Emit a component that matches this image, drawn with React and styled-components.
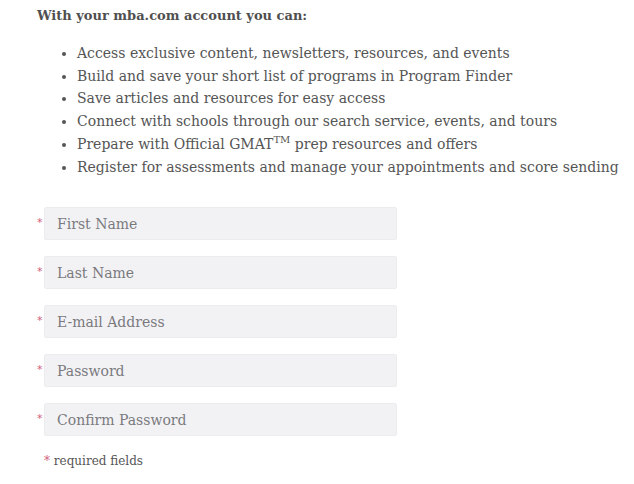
import React from "react";
import styled, { createGlobalStyle } from "styled-components";

const Global = createGlobalStyle`
  html, body { margin: 0; padding: 0; background: #fff; }
  body { font-family: "DejaVu Serif", serif; color: #555; }
`;

const Page = styled.div`
  padding: 6px 0 0 37px;
  width: 597px;
`;

const Heading = styled.h3`
  margin: 0;
  font-size: 13px;
  font-weight: bold;
  line-height: 20px;
  color: #4f4f4f;
`;

const List = styled.ul`
  margin: 16px 0 0 0;
  padding: 0 0 0 40px;
  list-style: disc;
`;

const Item = styled.li`
  font-size: 14px;
  line-height: 22.7px;
  color: #555;
  sup { font-size: 10px; line-height: 0; }
`;

const Form = styled.form`
  margin-top: 29px;
  display: flex;
  flex-direction: column;
  gap: 16px;
`;

const Row = styled.div`
  display: flex;
  align-items: center;
`;

const Star = styled.span`
  width: 7px;
  color: #d0607a;
  font-size: 11px;
  font-family: "DejaVu Sans", sans-serif;
  margin-top: -3px;
`;

const Input = styled.input`
  box-sizing: border-box;
  width: 353px;
  height: 33px;
  border: 1px solid #ececef;
  border-radius: 2px;
  background: #f2f2f5;
  padding: 0 12px;
  font-family: "DejaVu Serif", serif;
  font-size: 14px;
  color: #555;
  outline: none;
  &::placeholder { color: #7a7a7e; }
`;

const Note = styled.div`
  margin: 18px 0 0 7px;
  font-size: 12px;
  color: #555;
  span { color: #d0607a; }
`;

const fields = ["First Name", "Last Name", "E-mail Address", "Password", "Confirm Password"];

export default function App() {
  return (
    <>
      <Global />
      <Page>
        <Heading>With your mba.com account you can:</Heading>
        <List>
          <Item>Access exclusive content, newsletters, resources, and events</Item>
          <Item>Build and save your short list of programs in Program Finder</Item>
          <Item>Save articles and resources for easy access</Item>
          <Item>Connect with schools through our search service, events, and tours</Item>
          <Item>Prepare with Official GMAT<sup>TM</sup> prep resources and offers</Item>
          <Item>Register for assessments and manage your appointments and score sending</Item>
        </List>
        <Form onSubmit={(e) => e.preventDefault()}>
          {fields.map((f) => (
            <Row key={f}>
              <Star>*</Star>
              <Input placeholder={f} type={f.includes("Password") ? "password" : "text"} />
            </Row>
          ))}
        </Form>
        <Note><span>*</span> required fields</Note>
      </Page>
    </>
  );
}
